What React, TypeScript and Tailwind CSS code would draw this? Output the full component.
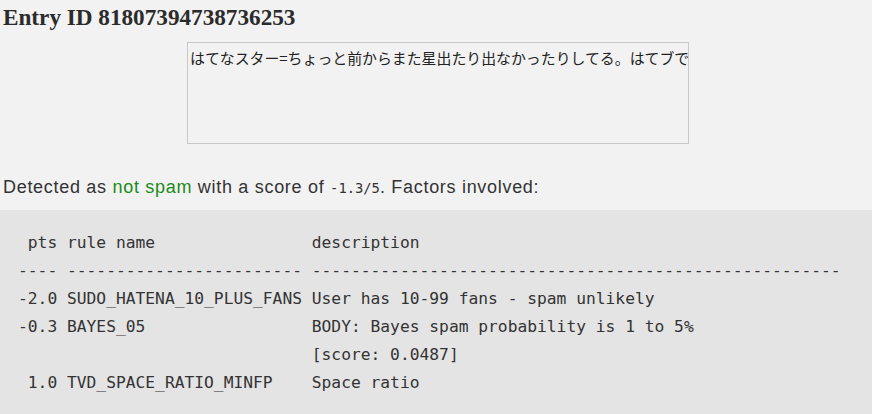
import React from "react";

const pre = [
  " pts rule name                description",
  "---- ------------------------ ------------------------------------------------------",
  "-2.0 SUDO_HATENA_10_PLUS_FANS User has 10-99 fans - spam unlikely",
  "-0.3 BAYES_05                 BODY: Bayes spam probability is 1 to 5%",
  "                              [score: 0.0487]",
  " 1.0 TVD_SPACE_RATIO_MINFP    Space ratio",
].join("\n");

export default function App() {
  return (
    <div className="min-h-[414px] bg-[#f2f2f2] text-[#333] flex flex-col">
      <h2 className="pl-[3px] pt-[3px] text-[23.2px] leading-[28px] font-bold text-[#2b2b2b] font-['Liberation_Serif',serif]">
        Entry ID 81807394738736253
      </h2>
      <div className="flex justify-center pl-[4px] mt-[11px]">
        <div className="w-[502px] h-[102px] border border-[#c8c8c8] bg-[#f2f2f2] overflow-hidden whitespace-nowrap pl-[2px] pt-[5px] text-[14.9px] leading-[20px] text-[#222] font-['Noto_Sans_CJK_JP',sans-serif]">
          はてなスター=ちょっと前からまた星出たり出なかったりしてる。はてブで
        </div>
      </div>
      <p className="pl-[3px] mt-[31px] text-[18px] leading-[24px] tracking-[0.7px] text-[#333] font-['Liberation_Sans',Arial,sans-serif]">
        Detected as <span className="text-[#1a8a1a]">not spam</span> with a score of{" "}
        <code className="text-[13.8px] tracking-normal font-['DejaVu_Sans_Mono',monospace]">-1.3/5</code>
        . Factors involved:
      </p>
      <pre className="flex-1 mt-[10px] bg-[#e4e4e4] pl-[18px] pt-[19px] text-[16.28px] leading-[28px] text-[#333] font-['DejaVu_Sans_Mono',monospace]">
        {pre}
      </pre>
    </div>
  );
}
